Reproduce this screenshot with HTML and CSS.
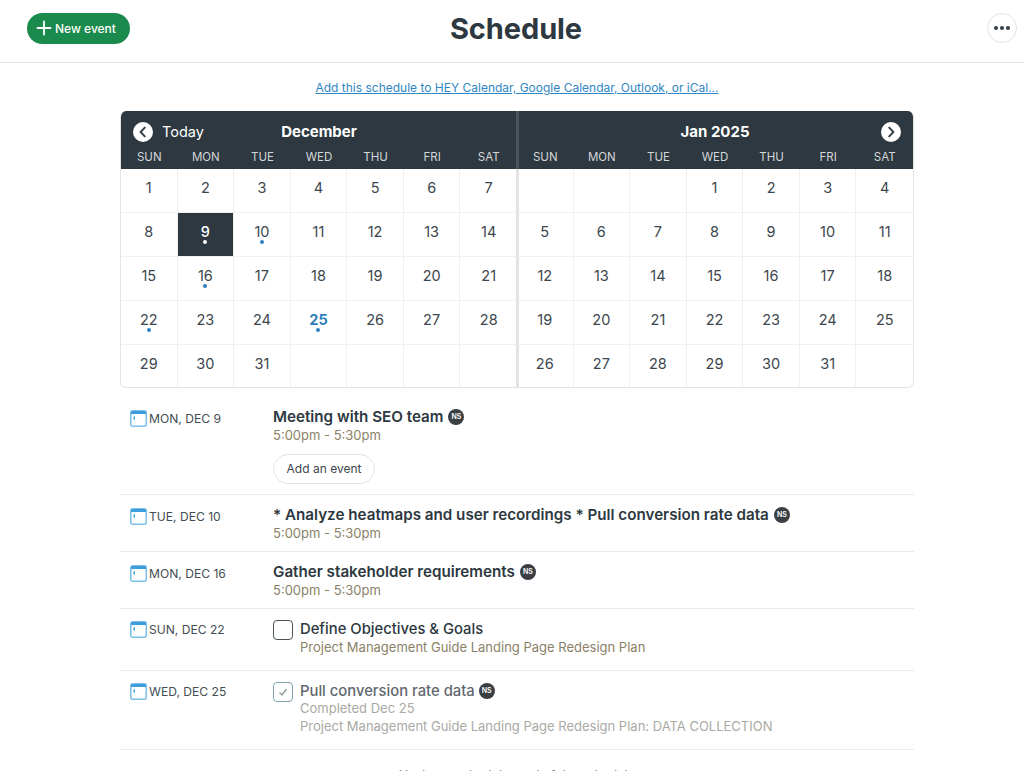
FILE: index.html
```html
<!DOCTYPE html>
<html lang="en">
<head>
  <meta charset="UTF-8">
  <meta name="viewport" content="width=device-width, initial-scale=1.0">
  <title>Schedule</title>
  <link rel="stylesheet" href="styles.css">
</head>
<body>

<header class="top_bar">
  <a class="new_btn" href="#">
    <svg width="16" height="16" viewBox="0 0 16 16"><path d="M8 1.5v13M1.5 8h13" stroke="#fff" stroke-width="1.8" stroke-linecap="round" fill="none"/></svg>
    New event
  </a>
  <h1>Schedule</h1>
  <button class="more_btn" aria-label="More">
    <svg width="18" height="6" viewBox="0 0 18 6"><circle cx="3" cy="3" r="2.1" fill="#38434a"/><circle cx="9" cy="3" r="2.1" fill="#38434a"/><circle cx="15" cy="3" r="2.1" fill="#38434a"/></svg>
  </button>
</header>

<main class="main">
  <p class="sub_link"><a href="#">Add this schedule to HEY Calendar, Google Calendar, Outlook, or iCal...</a></p>

  <section class="calendar">
    <div class="month">
      <div class="month_head">
        <div class="month_title">
          <span class="nav_btn nav_prev"><svg width="20" height="20" viewBox="0 0 20 20"><circle cx="10" cy="10" r="10" fill="#fff"/><path d="M11.8 5.6 7.6 10l4.2 4.4" stroke="#38434a" stroke-width="2" fill="none" stroke-linecap="round" stroke-linejoin="round"/></svg></span>
          <span class="today">Today</span>
          <b>December</b>
        </div>
        <div class="week_names"><span>SUN</span><span>MON</span><span>TUE</span><span>WED</span><span>THU</span><span>FRI</span><span>SAT</span></div>
      </div>
      <div class="days">
        <div>1</div><div>2</div><div>3</div><div>4</div><div>5</div><div>6</div><div>7</div>
        <div>8</div><div class="selected has_dot">9</div><div class="has_dot">10</div><div>11</div><div>12</div><div>13</div><div>14</div>
        <div>15</div><div class="has_dot">16</div><div>17</div><div>18</div><div>19</div><div>20</div><div>21</div>
        <div class="has_dot">22</div><div>23</div><div>24</div><div class="has_dot holiday">25</div><div>26</div><div>27</div><div>28</div>
        <div>29</div><div>30</div><div>31</div><div></div><div></div><div></div><div></div>
      </div>
    </div>
    <div class="month month_next">
      <div class="month_head">
        <div class="month_title">
          <b>Jan 2025</b>
          <span class="nav_btn nav_next"><svg width="20" height="20" viewBox="0 0 20 20"><circle cx="10" cy="10" r="10" fill="#fff"/><path d="M8.2 5.6 12.4 10l-4.2 4.4" stroke="#38434a" stroke-width="2" fill="none" stroke-linecap="round" stroke-linejoin="round"/></svg></span>
        </div>
        <div class="week_names"><span>SUN</span><span>MON</span><span>TUE</span><span>WED</span><span>THU</span><span>FRI</span><span>SAT</span></div>
      </div>
      <div class="days">
        <div></div><div></div><div></div><div>1</div><div>2</div><div>3</div><div>4</div>
        <div>5</div><div>6</div><div>7</div><div>8</div><div>9</div><div>10</div><div>11</div>
        <div>12</div><div>13</div><div>14</div><div>15</div><div>16</div><div>17</div><div>18</div>
        <div>19</div><div>20</div><div>21</div><div>22</div><div>23</div><div>24</div><div>25</div>
        <div>26</div><div>27</div><div>28</div><div>29</div><div>30</div><div>31</div><div></div>
      </div>
    </div>
  </section>

  <section class="agenda">
    <div class="row row_first">
      <div class="date"><svg class="cal_icon" width="17" height="17" viewBox="0 0 17 17"><rect x=".75" y=".75" width="15.5" height="15.5" rx="2" fill="#fff" stroke="#7cc0ea" stroke-width="1.5"/><path d="M1 2.5a1.5 1.5 0 0 1 1.5-1.5h12a1.5 1.5 0 0 1 1.5 1.5V4H1z" fill="#3d9ddc"/><rect x="3.5" y="6.5" width="1.5" height="3" fill="#3d9ddc"/></svg>MON, DEC 9</div>
      <div class="info">
        <div class="title">Meeting with SEO team <span class="avatar">NS</span></div>
        <div class="meta">5:00pm - 5:30pm</div>
        <a class="add_btn" href="#">Add an event</a>
      </div>
    </div>
    <div class="row">
      <div class="date"><svg class="cal_icon" width="17" height="17" viewBox="0 0 17 17"><rect x=".75" y=".75" width="15.5" height="15.5" rx="2" fill="#fff" stroke="#7cc0ea" stroke-width="1.5"/><path d="M1 2.5a1.5 1.5 0 0 1 1.5-1.5h12a1.5 1.5 0 0 1 1.5 1.5V4H1z" fill="#3d9ddc"/><rect x="3.5" y="6.5" width="1.5" height="3" fill="#3d9ddc"/></svg>TUE, DEC 10</div>
      <div class="info">
        <div class="title">* Analyze heatmaps and user recordings * Pull conversion rate data <span class="avatar">NS</span></div>
        <div class="meta">5:00pm - 5:30pm</div>
      </div>
    </div>
    <div class="row">
      <div class="date"><svg class="cal_icon" width="17" height="17" viewBox="0 0 17 17"><rect x=".75" y=".75" width="15.5" height="15.5" rx="2" fill="#fff" stroke="#7cc0ea" stroke-width="1.5"/><path d="M1 2.5a1.5 1.5 0 0 1 1.5-1.5h12a1.5 1.5 0 0 1 1.5 1.5V4H1z" fill="#3d9ddc"/><rect x="3.5" y="6.5" width="1.5" height="3" fill="#3d9ddc"/></svg>MON, DEC 16</div>
      <div class="info">
        <div class="title">Gather stakeholder requirements <span class="avatar">NS</span></div>
        <div class="meta">5:00pm - 5:30pm</div>
      </div>
    </div>
    <div class="row row_todo">
      <div class="date"><svg class="cal_icon" width="17" height="17" viewBox="0 0 17 17"><rect x=".75" y=".75" width="15.5" height="15.5" rx="2" fill="#fff" stroke="#7cc0ea" stroke-width="1.5"/><path d="M1 2.5a1.5 1.5 0 0 1 1.5-1.5h12a1.5 1.5 0 0 1 1.5 1.5V4H1z" fill="#3d9ddc"/><rect x="3.5" y="6.5" width="1.5" height="3" fill="#3d9ddc"/></svg>SUN, DEC 22</div>
      <div class="todo">
        <span class="check"></span>
        <div class="info">
          <div class="title title_todo">Define Objectives &amp; Goals</div>
          <div class="meta meta_gap">Project Management Guide Landing Page Redesign Plan</div>
        </div>
      </div>
    </div>
    <div class="row row_todo">
      <div class="date"><svg class="cal_icon" width="17" height="17" viewBox="0 0 17 17"><rect x=".75" y=".75" width="15.5" height="15.5" rx="2" fill="#fff" stroke="#7cc0ea" stroke-width="1.5"/><path d="M1 2.5a1.5 1.5 0 0 1 1.5-1.5h12a1.5 1.5 0 0 1 1.5 1.5V4H1z" fill="#3d9ddc"/><rect x="3.5" y="6.5" width="1.5" height="3" fill="#3d9ddc"/></svg>WED, DEC 25</div>
      <div class="todo todo_done">
        <span class="check"><svg width="12" height="12" viewBox="0 0 12 12"><path d="M2.5 6.5 5 9l4.5-6" stroke="#8f9a9e" stroke-width="1.3" fill="none"/></svg></span>
        <div class="info">
          <div class="title title_todo">Pull conversion rate data <span class="avatar">NS</span></div>
          <div class="meta">Completed Dec 25</div>
          <div class="meta">Project Management Guide Landing Page Redesign Plan: DATA COLLECTION</div>
        </div>
      </div>
    </div>
  </section>

  <p class="end_note">You've reached the end of the schedule</p>
</main>

</body>
</html>
```

FILE: styles.css
```css
*{
  padding: 0;
  margin: 0;
  box-sizing: border-box;
  font-family: "Inter", "Liberation Sans", sans-serif;
}

html, body{
  height: 771px;
  overflow: hidden;
  background: #fff;
  color: #2d3840;
}

a{
  color: inherit;
  text-decoration: none;
}

/* top bar */
.top_bar{
  height: 63px;
  padding: 0 7px 6px 27px;
  display: flex;
  align-items: center;
  justify-content: space-between;
  border-bottom: 1px solid #e6e5e2;
  position: relative;
}
.top_bar h1{
  position: absolute;
  left: 8px;
  right: 0;
  top: 11px;
  text-align: center;
  font-size: 29px;
  line-height: 36px;
  font-weight: 700;
  letter-spacing: -0.1px;
  color: #2d3840;
}
.new_btn{
  width: 103px;
  height: 31px;
  border-radius: 16px;
  background: #1b8a4d;
  color: #fff;
  font-size: 12px;
  font-weight: 500;
  display: flex;
  align-items: center;
  gap: 3px;
  padding-left: 9px;
}
.more_btn{
  width: 30px;
  height: 30px;
  border-radius: 50%;
  border: 1px solid #e3e3e1;
  background: #fff;
  display: flex;
  align-items: center;
  justify-content: center;
}

.main{
  width: 794px;
  margin-left: 120px;
}

.sub_link{
  text-align: center;
  font-size: 12px;
  line-height: 16px;
  padding: 17px 0 15px;
  color: #2f86c4;
}
.sub_link a{
  text-decoration: underline;
}

/* calendar */
.calendar{
  display: grid;
  grid-template-columns: 396px 396px;
  border: 1px solid #e4e4e2;
  border-top: none;
  border-radius: 6px;
  overflow: hidden;
  height: 277px;
}
.month_next{
  position: relative;
}
/* split between the two months, sits over the cells */
.month_next::before{
  content: "";
  position: absolute;
  left: -1px;
  top: 58px;
  bottom: 0;
  width: 3px;
  background: #e2e3e2;
}
.month_next::after{
  content: "";
  position: absolute;
  left: -1px;
  top: 0;
  height: 58px;
  width: 3px;
  background: #4a545b;
}
.month_head{
  height: 58px;
  background: #2d3840;
  color: #fff;
}
.month_title{
  height: 40px;
  display: flex;
  align-items: center;
  position: relative;
  font-size: 15px;
  justify-content: center;
}
.month_title b{
  font-weight: 700;
}
.nav_btn{
  position: absolute;
  top: 11px;
  height: 20px;
}
.nav_prev{ left: 12px; }
.nav_next{ right: 12px; }
.today{
  position: absolute;
  left: 41px;
  font-size: 14.5px;
  font-weight: 400;
}
.week_names{
  display: grid;
  grid-template-columns: repeat(7, 1fr);
  text-align: center;
  font-size: 11.5px;
  color: #d4d7d9;
  line-height: 16px;
  margin-top: -2px;
}
.days{
  display: grid;
  grid-template-columns: repeat(7, 1fr);
  grid-auto-rows: 44px;
}
.days div{
  position: relative;
  text-align: center;
  font-size: 14.5px;
  line-height: 37px;
  color: #3c464d;
  border-right: 1px solid #f0f0ee;
  border-bottom: 1px solid #f0f0ee;
}
.days div:nth-child(7n){
  border-right: none;
}
.days div:nth-last-child(-n+7){
  border-bottom: none;
}
.days .selected{
  background: #2d3840;
  color: #fff;
  font-weight: 500;
}
.days .holiday{
  color: #2f7fbd;
  font-weight: 700;
}
.has_dot::after{
  content: "";
  position: absolute;
  left: 50%;
  top: 27px;
  width: 4px;
  height: 4px;
  margin-left: -2px;
  border-radius: 50%;
  background: #2f7fbd;
}
.selected::after{
  background: #fff;
}

/* agenda */
.row{
  display: flex;
  border-bottom: 1px solid #ecebe6;
  padding: 11px 0 9px;
}
.row_first{
  padding: 20px 0 10px;
}
.row_todo{
  padding: 10px 0 14px;
}
.date{
  width: 153px;
  flex: none;
  height: 19px;
  padding: 2px 0 0 10px;
  display: flex;
  align-items: center;
  gap: 2px;
  font-size: 12.1px;
  color: #424c52;
}
.cal_icon{
  flex: none;
}
.title{
  font-size: 15.2px;
  line-height: 18px;
  font-weight: 600;
  color: #2d3840;
  display: flex;
  align-items: center;
  gap: 5px;
}
.title_todo{
  font-size: 14.8px;
  font-weight: 500;
  gap: 4px;
  margin: 1px 0 -1px;
}
.meta{
  font-size: 13px;
  line-height: 18px;
  color: #8a8268;
}
.meta_gap{
  margin-top: 1px;
}
.avatar{
  width: 16px;
  height: 16px;
  border-radius: 50%;
  background: #3b3f44;
  color: #fff;
  font-size: 7px;
  font-weight: 600;
  display: inline-flex;
  align-items: center;
  justify-content: center;
}
.add_btn{
  display: block;
  width: 102px;
  height: 30px;
  margin-top: 10px;
  border: 1px solid #e3e3e1;
  border-radius: 15px;
  text-align: center;
  font-size: 12px;
  line-height: 28px;
  color: #3c464d;
}
.todo{
  display: flex;
  gap: 7px;
}
.check{
  width: 20px;
  height: 20px;
  margin-top: 1px;
  border: 1.5px solid #4a545a;
  border-radius: 4px;
  flex: none;
  display: flex;
  align-items: center;
  justify-content: center;
}
.todo_done .check{
  border: 1px solid #7ea3ac;
}
.todo_done .title{
  color: #5f686e;
}
.todo_done .meta{
  color: #aaa9a3;
}

.end_note{
  text-align: center;
  font-size: 12.5px;
  padding-top: 18px;
  color: #8a8268;
}
```
